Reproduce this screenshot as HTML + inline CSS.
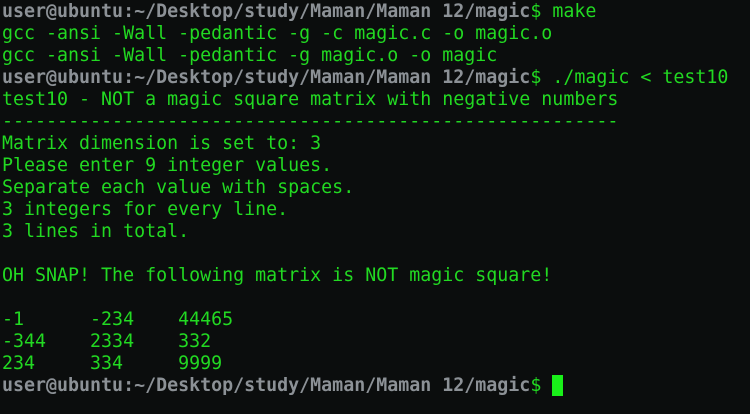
<!DOCTYPE html>
<html><head><style>
html,body{margin:0;padding:0;width:750px;height:414px;background:#0b0d0d;overflow:hidden}
pre{margin:0;padding:1px 0 0 2px;font-family:"DejaVu Sans Mono","Liberation Mono",monospace;font-size:18.3px;line-height:22px;color:#22d922}
.p{color:#8c9196;font-weight:bold}
.c{display:inline-block;width:11px;height:21px;background:#19f019;vertical-align:-5px}
</style></head><body><pre><span class="p">user@ubuntu:~/Desktop/study/Maman/Maman 12/magic</span>$ make
gcc -ansi -Wall -pedantic -g -c magic.c -o magic.o
gcc -ansi -Wall -pedantic -g magic.o -o magic
<span class="p">user@ubuntu:~/Desktop/study/Maman/Maman 12/magic</span>$ ./magic &lt; test10
test10 - NOT a magic square matrix with negative numbers
--------------------------------------------------------
Matrix dimension is set to: 3
Please enter 9 integer values.
Separate each value with spaces.
3 integers for every line.
3 lines in total.

OH SNAP! The following matrix is NOT magic square!

-1      -234    44465
-344    2334    332
234     334     9999
<span class="p">user@ubuntu:~/Desktop/study/Maman/Maman 12/magic</span>$ <span class="c"></span></pre></body></html>
